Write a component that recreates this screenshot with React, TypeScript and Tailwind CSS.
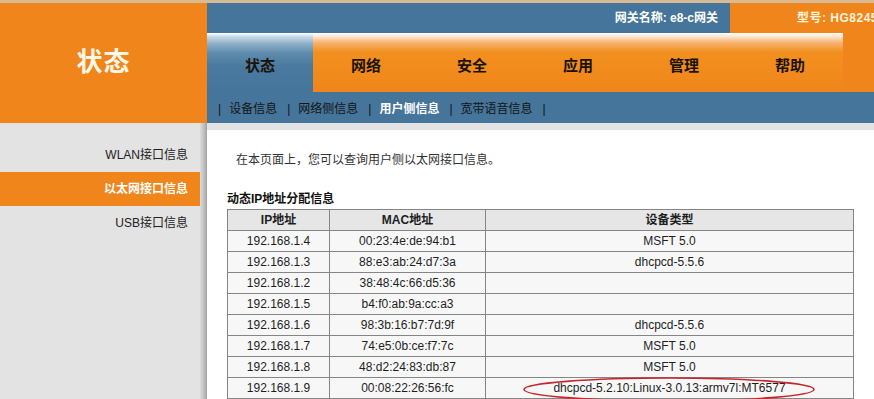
import React from "react";

const rows: [string, string, string][] = [
  ["192.168.1.4", "00:23:4e:de:94:b1", "MSFT 5.0"],
  ["192.168.1.3", "88:e3:ab:24:d7:3a", "dhcpcd-5.5.6"],
  ["192.168.1.2", "38:48:4c:66:d5:36", ""],
  ["192.168.1.5", "b4:f0:ab:9a:cc:a3", ""],
  ["192.168.1.6", "98:3b:16:b7:7d:9f", "dhcpcd-5.5.6"],
  ["192.168.1.7", "74:e5:0b:ce:f7:7c", "MSFT 5.0"],
  ["192.168.1.8", "48:d2:24:83:db:87", "MSFT 5.0"],
  ["192.168.1.9", "00:08:22:26:56:fc", "dhcpcd-5.2.10:Linux-3.0.13:armv7l:MT6577"],
];

const tabs = ["状态", "网络", "安全", "应用", "管理", "帮助"];

export default function App() {
  return (
    <div
      className="w-[874px] h-[399px] overflow-hidden bg-[#e3e3e3] text-[12px]"
      style={{ fontFamily: '"Liberation Sans", "Noto Sans CJK SC", sans-serif' }}
    >
      <div className="h-[3px] bg-[#d9bb93]" />
      <div className="flex h-[120px]">
        <div className="w-[207px] bg-[#f0851b] flex items-center justify-center pb-[2px]">
          <span className="text-[26px] font-bold text-[#fff8e8] tracking-[1px]">状态</span>
        </div>
        <div className="flex-1 flex flex-col">
          <div className="h-[30px] flex">
            <div className="flex-1 bg-[#45759a] flex items-center justify-end pr-[12px] pb-[1px]">
              <span className="font-bold text-white">网关名称: e8-c网关</span>
            </div>
            <div className="w-[144px] bg-[#f0851b] flex items-center pl-[67px] pb-[1px] whitespace-nowrap overflow-hidden">
              <span className="font-bold text-[#fff4dc] tracking-[0.5px]">型号: HG8245</span>
            </div>
          </div>
          <div className="h-[59px] flex bg-[#45759a]">
            {tabs.map((t, i) => (
              <div
                key={t}
                className={
                  i === 0
                    ? "w-[106px] flex items-center justify-center pt-[7px] bg-[linear-gradient(to_bottom,#ffffff_0%,#c9dbe8_6%,#8fb0c8_18%,#5f8cae_34%,#4a7a9f_55%,#45759a_100%)]"
                    : "w-[106px] flex items-center justify-center pt-[7px] bg-[linear-gradient(to_bottom,#ffffff_0%,#fde7cf_6%,#f7b472_16%,#f2901f_32%,#f0851b_100%)]"
                }
              >
                <span className="font-bold text-[15px] text-[#1a1208]">{t}</span>
              </div>
            ))}
            <div className="flex-1 bg-[#f0851b]" />
          </div>
          <div className="h-[31px] bg-[#45759a] flex items-center pl-[11px] pt-[3px] text-[#141414] whitespace-nowrap">
            <span>|</span>
            <span className="ml-[8px]">设备信息</span>
            <span className="ml-[10px]">|</span>
            <span className="ml-[8px]">网络侧信息</span>
            <span className="ml-[10px]">|</span>
            <span className="ml-[8px] font-bold text-white">用户侧信息</span>
            <span className="ml-[10px]">|</span>
            <span className="ml-[8px]">宽带语音信息</span>
            <span className="ml-[10px]">|</span>
          </div>
        </div>
      </div>
      <div className="flex h-[276px]">
        <div className="w-[200px] pt-[15px]">
          <div className="h-[34px] flex items-center justify-end pr-[12px] text-[#222]">WLAN接口信息</div>
          <div className="h-[34px] flex items-center justify-end pr-[12px] bg-[#f0851b] text-white font-bold">
            以太网接口信息
          </div>
          <div className="h-[34px] flex items-center justify-end pr-[12px] text-[#222]">USB接口信息</div>
        </div>
        <div className="w-[7px] bg-[linear-gradient(to_right,#dcdcdc,#b8b8b8_70%,#a0a0a0)]" />
        <div className="flex-1 bg-white mt-[7px] pl-[20px] pt-[22px]">
          <div className="pl-[9px] text-[#333] h-[16px] leading-[16px]">在本页面上，您可以查询用户侧以太网接口信息。</div>
          <div className="mt-[23px] font-bold text-[#111] h-[16px] leading-[16px]">动态IP地址分配信息</div>
          <table className="mt-[2px] border-collapse w-[627px] text-[#1e1e1e]">
            <thead>
              <tr>
                <th className="w-[102px] h-[21px] p-0 border border-[#858585] bg-[#e6e6e6] font-bold">IP地址</th>
                <th className="w-[156px] h-[21px] p-0 border border-[#858585] bg-[#e6e6e6] font-bold">MAC地址</th>
                <th className="h-[21px] p-0 border border-[#858585] bg-[#e6e6e6] font-bold">设备类型</th>
              </tr>
            </thead>
            <tbody>
              {rows.map((r, i) => (
                <tr key={i}>
                  <td className="h-[21px] p-0 border border-[#858585] bg-[#f7f7f7] text-center">{r[0]}</td>
                  <td className="h-[21px] p-0 border border-[#858585] bg-[#f7f7f7] text-center">{r[1]}</td>
                  <td className="h-[21px] p-0 border border-[#858585] bg-[#f7f7f7] text-center relative">
                    {r[2]}
                    {i === rows.length - 1 && (
                      <svg
                        className="absolute left-[36px] top-[-2px] pointer-events-none"
                        width="294"
                        height="27"
                        viewBox="0 0 294 27"
                      >
                        <ellipse cx="147" cy="13.5" rx="145" ry="11.5" fill="none" stroke="#c4262b" strokeWidth="1.6" />
                      </svg>
                    )}
                  </td>
                </tr>
              ))}
            </tbody>
          </table>
        </div>
      </div>
    </div>
  );
}
